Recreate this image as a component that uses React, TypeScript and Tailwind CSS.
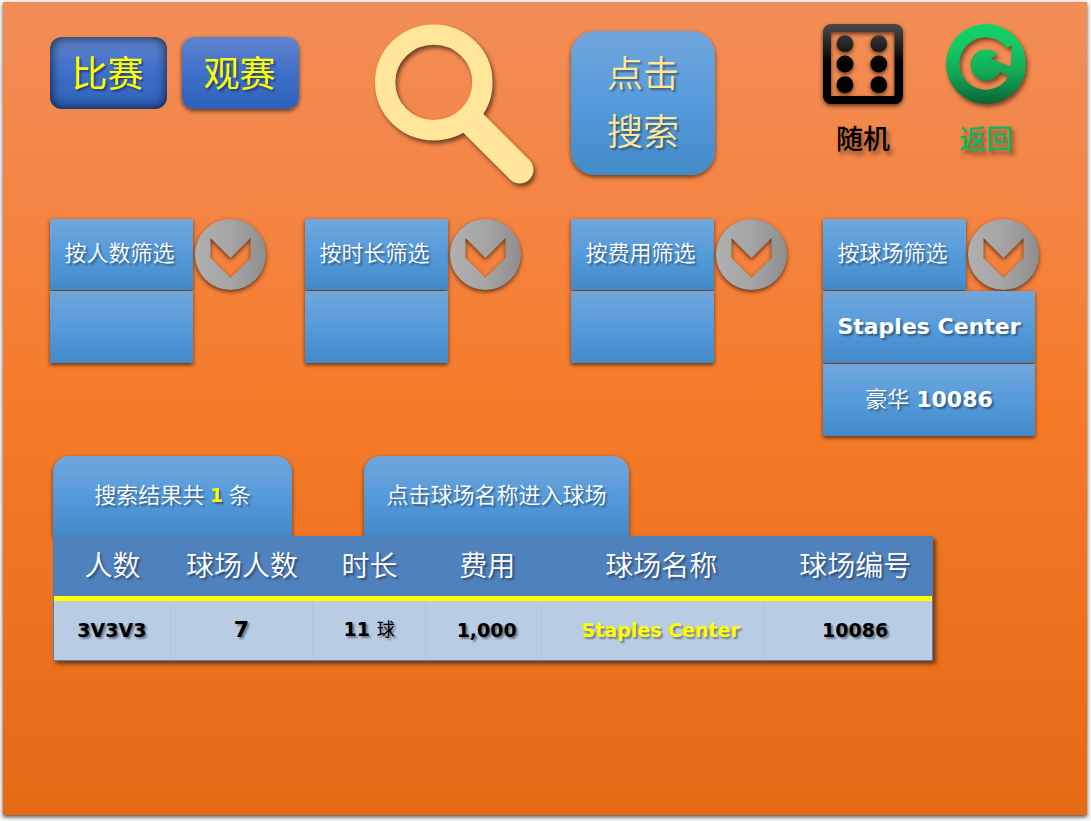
import React, { useState } from "react";

const columns = "grid grid-cols-[255fr_266fr_252fr_264fr]";
const blue = "bg-linear-to-b from-[#71a6db] via-[#559bdb] to-[#438ac9]";
const raised = "shadow-[0_2px_4px_rgba(0,0,0,0.6)]";
const textShadow = "[text-shadow:2px_2px_2px_rgba(0,0,0,0.4)]";

function ModeTab({ label, active, onClick }: { label: string; active: boolean; onClick: () => void }) {
  const depth = active ? "shadow-[inset_0_0_12px_rgba(0,0,0,0.8)]" : raised;
  return (
    <button
      type="button"
      aria-pressed={active}
      onClick={onClick}
      className={`h-[72px] w-[117px] rounded-xl bg-linear-to-b from-[#6083cb] via-[#3e70ca] to-[#2e61ba] pt-1 pr-0.5 text-4xl text-[#ffff00] ${depth} ${textShadow}`}
    >
      {label}
    </button>
  );
}

function MagnifierIcon() {
  return (
    <svg viewBox="0 0 164 165" className="h-[165px] w-[164px] overflow-visible drop-shadow-[2px_3px_2px_rgba(0,0,0,0.55)]" aria-hidden="true">
      <g fill="none" stroke="#ffe699">
        <ellipse cx="59.8" cy="58.4" rx="48.6" ry="47.8" strokeWidth="20.4" />
        <path d="M97 97L145.8 145.8" strokeWidth="27.4" strokeLinecap="round" />
      </g>
    </svg>
  );
}

function DiceIcon() {
  return (
    <svg viewBox="0 0 80 80" className="size-20 overflow-visible drop-shadow-[0_2px_2px_rgba(0,0,0,0.6)]" aria-hidden="true">
      <defs>
        <linearGradient id="dice" x1="0" y1="0" x2="0" y2="80" gradientUnits="userSpaceOnUse">
          <stop offset="0" stopColor="#4a4a4a" />
          <stop offset="0.5" stopColor="#000" />
        </linearGradient>
      </defs>
      <g fill="url(#dice)">
        <path fillRule="evenodd" d="M8 0H72A8 8 0 0 1 80 8V72A8 8 0 0 1 72 80H8A8 8 0 0 1 0 72V8A8 8 0 0 1 8 0ZM8 8V72H71.5V8Z" />
        {[19.7, 40, 60.7].map((y) => (
          <React.Fragment key={y}>
            <circle cx="22" cy={y} r="8.4" />
            <circle cx="55.8" cy={y} r="8.4" />
          </React.Fragment>
        ))}
      </g>
    </svg>
  );
}

function BackIcon() {
  return (
    <svg viewBox="0 0 80 80" className="size-20 overflow-visible drop-shadow-[2px_3px_2px_rgba(0,0,0,0.5)]" aria-hidden="true">
      <defs>
        <linearGradient id="back" x1="0" y1="0" x2="0" y2="80" gradientUnits="userSpaceOnUse">
          <stop offset="0" stopColor="#14d169" />
          <stop offset="0.3" stopColor="#13c864" />
          <stop offset="0.6" stopColor="#12a955" />
          <stop offset="1" stopColor="#0a6535" />
        </linearGradient>
      </defs>
      <path
        fill="url(#back)"
        fillRule="evenodd"
        d="M40 0A40 40 0 1 1 40 80A40 40 0 1 1 40 0ZM61 24.3L65.7 21L64.7 42.7L44.7 34.7L51.3 30.3A15.5 15.5 0 1 0 54 47.7L62.7 52A26.2 26.2 0 1 1 61 24.3Z"
      />
    </svg>
  );
}

function ChevronIcon() {
  return (
    <svg viewBox="0 0 71 71" className="size-[71px] overflow-visible drop-shadow-[0_2px_2px_rgba(0,0,0,0.6)]" aria-hidden="true">
      <defs>
        <linearGradient id="disc">
          <stop offset="0" stopColor="#b0b0b0" />
          <stop offset="0.5" stopColor="#a5a5a5" />
          <stop offset="1" stopColor="#8e8e8e" />
        </linearGradient>
      </defs>
      <path
        fill="url(#disc)"
        fillRule="evenodd"
        d="M35.5 0A35.5 35.5 0 1 1 35.5 71A35.5 35.5 0 1 1 35.5 0ZM15.5 19L35.5 39L55.5 19V39L35.5 58.7L15.5 39Z"
      />
    </svg>
  );
}

interface FilterProps {
  label: string;
  options: React.ReactNode[];
  wide?: boolean;
}

function Filter({ label, options, wide = false }: FilterProps) {
  const width = wide ? "w-[212px]" : "w-[143px]";
  return (
    <div className="flex flex-col items-start gap-px">
      <div className="flex gap-0.5">
        <button type="button" className={`h-[71px] w-[143px] pr-1 pb-0.5 text-[22px] font-[350] text-white ${blue} ${raised} ${textShadow}`}>
          {label}
        </button>
        <button type="button" aria-label={label} className="rounded-full">
          <ChevronIcon />
        </button>
      </div>
      {options.map((option, i) => (
        <button key={i} type="button" aria-label={option ? undefined : label} className={`relative h-[72px] pb-0.5 text-[22px] text-white ${width} ${blue} ${raised} ${textShadow}`}>
          {option}
        </button>
      ))}
    </div>
  );
}

const headings = [
  { text: "人数", layout: "w-[13.3%]" },
  { text: "球场人数", layout: "w-[16.2%]" },
  { text: "时长", layout: "w-[12.9%]" },
  { text: "费用", layout: "w-[13.2%] pl-1.5" },
  { text: "球场名称", layout: "w-[25.3%] pl-4" },
  { text: "球场编号", layout: "w-[19.1%] pl-3.5" },
];

export default function App() {
  const [mode, setMode] = useState("比赛");
  const cell = "border-r border-[#b4c5d6] pb-0.5 last:border-r-0";
  return (
    <div className="flex min-h-screen bg-[#fafafa] pt-0.5 pr-1 pb-1.5 pl-[3px] font-['DejaVu_Sans','Noto_Sans_CJK_SC',sans-serif]">
      <main className="flex-1 bg-linear-to-b from-[#f28d57] via-[#f67b28] to-[#e46a14] shadow-[0_2px_4px_rgba(0,0,0,0.7)]">
        <header className={`${columns} items-start pt-[22px] pl-[47px]`}>
          <nav className="flex gap-[15px] pt-[13px]">
            {["比赛", "观赛"].map((name) => (
              <ModeTab key={name} label={name} active={mode === name} onClick={() => setMode(name)} />
            ))}
          </nav>
          <div className="pl-[69px]">
            <MagnifierIcon />
          </div>
          <div className="pt-[7px]">
            <button type="button" className={`size-36 rounded-3xl pt-0.5 text-4xl leading-[58px] font-[350] text-[#ffe699] ${blue} ${raised} ${textShadow}`}>
              点击
              <br />
              搜索
            </button>
          </div>
          <div className="flex gap-[43px]">
            <button type="button" className="flex flex-col items-center gap-4 text-[27px] leading-10 font-medium text-black [text-shadow:3px_4px_4px_rgba(0,0,0,0.45)]">
              <DiceIcon />
              随机
            </button>
            <button type="button" className="flex flex-col items-center gap-4 text-[27px] leading-10 font-medium text-[#16b45e] [text-shadow:3px_4px_4px_rgba(0,0,0,0.45)]">
              <BackIcon />
              返回
            </button>
          </div>
        </header>

        <section className={`${columns} items-start pt-[30px] pl-[47px]`}>
          <Filter label="按人数筛选" options={[""]} />
          <Filter label="按时长筛选" options={[""]} />
          <Filter label="按费用筛选" options={[""]} />
          <Filter
            wide
            label="按球场筛选"
            options={[
              <span className="font-bold">Staples Center</span>,
              <>
                <span className="font-[350]">豪华</span> <span className="font-bold">10086</span>
              </>,
            ]}
          />
        </section>

        <section className="pt-5 pr-[154px] pl-[50px]">
          <div className="flex gap-[72px] text-[22px] font-[350] text-white">
            <p className={`flex h-20 w-[239px] items-center justify-center gap-1.5 rounded-t-2xl pb-0.5 ${blue} ${raised} ${textShadow}`}>
              搜索结果共
              <span className="font-['DejaVu_Sans_Condensed','DejaVu_Sans',sans-serif] text-xl font-bold text-[#ffff00]">1</span>
              条
            </p>
            <p className={`flex h-20 w-[265px] items-center justify-center rounded-t-2xl pb-0.5 ${blue} ${raised} ${textShadow}`}>
              点击球场名称进入球场
            </p>
          </div>
          <div className="relative border border-[#4f81bd] shadow-[3px_3px_4px_rgba(0,0,0,0.5)]">
            <table className="w-full table-fixed border-separate border-spacing-0 text-center">
              <thead>
                <tr className="h-16 bg-[#4f81bd]">
                  {headings.map((h) => (
                    <th key={h.text} scope="col" className={`border-b-[5px] border-[#ffff00] py-0 pr-0 text-[28px] leading-10 font-[350] text-white ${h.layout} ${textShadow}`}>
                      {h.text}
                    </th>
                  ))}
                </tr>
              </thead>
              <tbody>
                <tr className={`h-[59px] bg-[#b8cce4] text-[19px] leading-7 font-bold text-black ${textShadow}`}>
                  <td className={cell}>3V3V3</td>
                  <td className={`${cell} text-[22px]`}>7</td>
                  <td className={cell}>
                    11 <span className="text-lg font-normal">球</span>
                  </td>
                  <td className={`${cell} pl-1.5`}>1,000</td>
                  <td className={`${cell} pl-4`}>
                    <a href="#staples-center" className="text-[#ffff00]">
                      Staples Center
                    </a>
                  </td>
                  <td className={`${cell} pl-3.5`}>10086</td>
                </tr>
              </tbody>
            </table>
          </div>
        </section>
      </main>
    </div>
  );
}
